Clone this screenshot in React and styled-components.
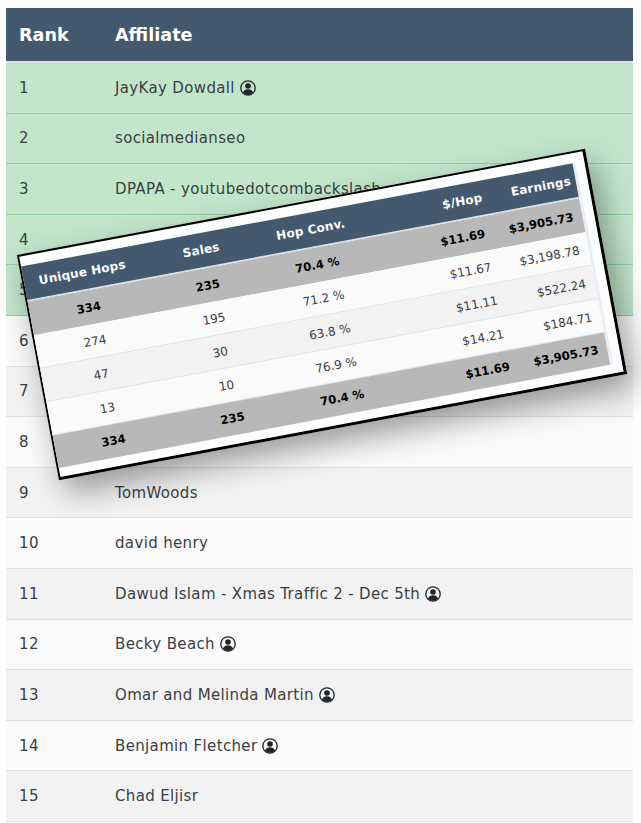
import React from 'react';
import styled, { createGlobalStyle } from 'styled-components';

const Global = createGlobalStyle`
  html, body { margin: 0; padding: 0; background: #fdfdfd; }
  body { font-family: "DejaVu Sans", Verdana, sans-serif; width: 641px; height: 823px; overflow: hidden; }
`;

const Page = styled.div`
  position: relative;
  padding: 8px 8px 0 6px;
`;

const Board = styled.div`
  display: flex;
  flex-direction: column;
`;

const HeadRow = styled.div`
  display: grid;
  grid-template-columns: 109px 1fr;
  align-items: center;
  height: 55px;
  background: #44596e;
  border-bottom: 2px solid #dee2e6;
  box-sizing: border-box;
  color: #fff;
  font-size: 17.6px;
  font-weight: 700;
`;

const HeadCell = styled.div`
  padding-left: ${p => (p.$first ? '13px' : '0')};
`;

const Row = styled.div`
  display: grid;
  grid-template-columns: 109px 1fr;
  align-items: center;
  height: 50.6px;
  box-sizing: border-box;
  color: #3a3f44;
  font-size: 15px;
  letter-spacing: 0.35px;
  border-bottom: 1px solid ${p => (p.$top ? '#8fcf9f' : '#dee2e6')};
  background: ${p => (p.$top ? '#c3e6cb' : p.$odd ? '#f2f2f2' : '#fafafa')};
`;

const RankCell = styled.div`
  padding-left: 13px;
`;

const NameCell = styled.div`
  display: flex;
  align-items: center;
  gap: 5px;
  white-space: nowrap;
`;

const Badge = styled.svg`
  width: 16px;
  height: 16px;
  flex: none;
`;

const PersonBadge = () => (
  <Badge viewBox="0 0 16 16" aria-hidden="true">
    <circle cx="8" cy="8" r="7.2" fill="none" stroke="#212529" strokeWidth="1.3" />
    <circle cx="8" cy="6" r="2.8" fill="#212529" />
    <path d="M2.9 12.6c.9-2.3 2.9-3.4 5.1-3.4s4.2 1.1 5.1 3.4A7 7 0 0 1 8 15a7 7 0 0 1-5.1-2.4z" fill="#212529" />
  </Badge>
);

const Card = styled.div`
  position: absolute;
  left: 33px;
  top: 199.5px;
  width: 578px;
  height: 229px;
  box-sizing: border-box;
  transform: rotate(-10.6deg);
  background: #fcfdff;
  border-style: solid;
  border-color: #000;
  border-width: 2px 3px 3px 2px;
  padding: 10px 9px 0 0;
  box-shadow: 6px 14px 30px rgba(0, 0, 0, 0.38);
  font-size: 12px;
  color: #3a3f44;
`;

const CardTable = styled.div`
  border-right: 3px solid #eaeef4;
`;

const Cols = `
  display: grid;
  grid-template-columns: 118px 124px 99px 131px 1fr;
  align-items: center;
`;

const CardHead = styled.div`
  ${Cols}
  height: 36px;
  background: #44596e;
  border-bottom: 2px solid #dee2e6;
  box-sizing: border-box;
  color: #fff;
  font-weight: 700;
  font-size: 12px;
  letter-spacing: 0.2px;
`;

const CardRow = styled.div`
  ${Cols}
  height: ${p => (p.$last ? '32.5px' : '34px')};
  box-sizing: border-box;
  background: ${p => (p.$total ? '#b8b8b8' : p.$odd ? '#f2f2f2' : '#fafafa')};
  border-bottom: ${p => (p.$total ? '0' : '1px solid #dee2e6')};
  color: ${p => (p.$total ? '#000' : '#3a3f44')};
  font-weight: ${p => (p.$total ? 700 : 400)};
  font-size: ${p => (p.$total ? '11.7px' : '12px')};
`;

const CenterCell = styled.div`
  text-align: center;
`;

const MoneyCell = styled.div`
  text-align: right;
  padding-right: ${p => p.$pad}px;
`;

const rows = [
  ['JayKay Dowdall', true],
  ['socialmedianseo'],
  ['DPAPA - youtubedotcombackslash'],
  [''],
  [''],
  [''],
  [''],
  [''],
  ['TomWoods'],
  ['david henry'],
  ['Dawud Islam - Xmas Traffic 2 - Dec 5th', true],
  ['Becky Beach', true],
  ['Omar and Melinda Martin', true],
  ['Benjamin Fletcher', true],
  ['Chad Eljisr'],
];

const stats = [
  { cells: ['334', '235', '70.4 %', '$11.69', '$3,905.73'], total: true },
  { cells: ['274', '195', '71.2 %', '$11.67', '$3,198.78'] },
  { cells: ['47', '30', '63.8 %', '$11.11', '$522.24'], odd: true },
  { cells: ['13', '10', '76.9 %', '$14.21', '$184.71'] },
  { cells: ['334', '235', '70.4 %', '$11.69', '$3,905.73'], total: true, last: true },
];

export default function App() {
  return (
    <Page>
      <Global />
      <Board>
        <HeadRow>
          <HeadCell $first>Rank</HeadCell>
          <HeadCell>Affiliate</HeadCell>
        </HeadRow>
        {rows.map(([name, badge], i) => (
          <Row key={i} $top={i < 5} $odd={i % 2 === 0}>
            <RankCell>{i + 1}</RankCell>
            <NameCell>
              {name}
              {badge && <PersonBadge />}
            </NameCell>
          </Row>
        ))}
      </Board>
      <Card>
        <CardTable>
          <CardHead>
            <CenterCell>Unique Hops</CenterCell>
            <CenterCell>Sales</CenterCell>
            <CenterCell>Hop Conv.</CenterCell>
            <MoneyCell $pad={6}>$/Hop</MoneyCell>
            <MoneyCell $pad={5}>Earnings</MoneyCell>
          </CardHead>
          {stats.map((s, i) => (
            <CardRow key={i} $total={s.total} $odd={s.odd} $last={s.last}>
              <CenterCell>{s.cells[0]}</CenterCell>
              <CenterCell>{s.cells[1]}</CenterCell>
              <CenterCell>{s.cells[2]}</CenterCell>
              <MoneyCell $pad={10}>{s.cells[3]}</MoneyCell>
              <MoneyCell $pad={9}>{s.cells[4]}</MoneyCell>
            </CardRow>
          ))}
        </CardTable>
      </Card>
    </Page>
  );
}
